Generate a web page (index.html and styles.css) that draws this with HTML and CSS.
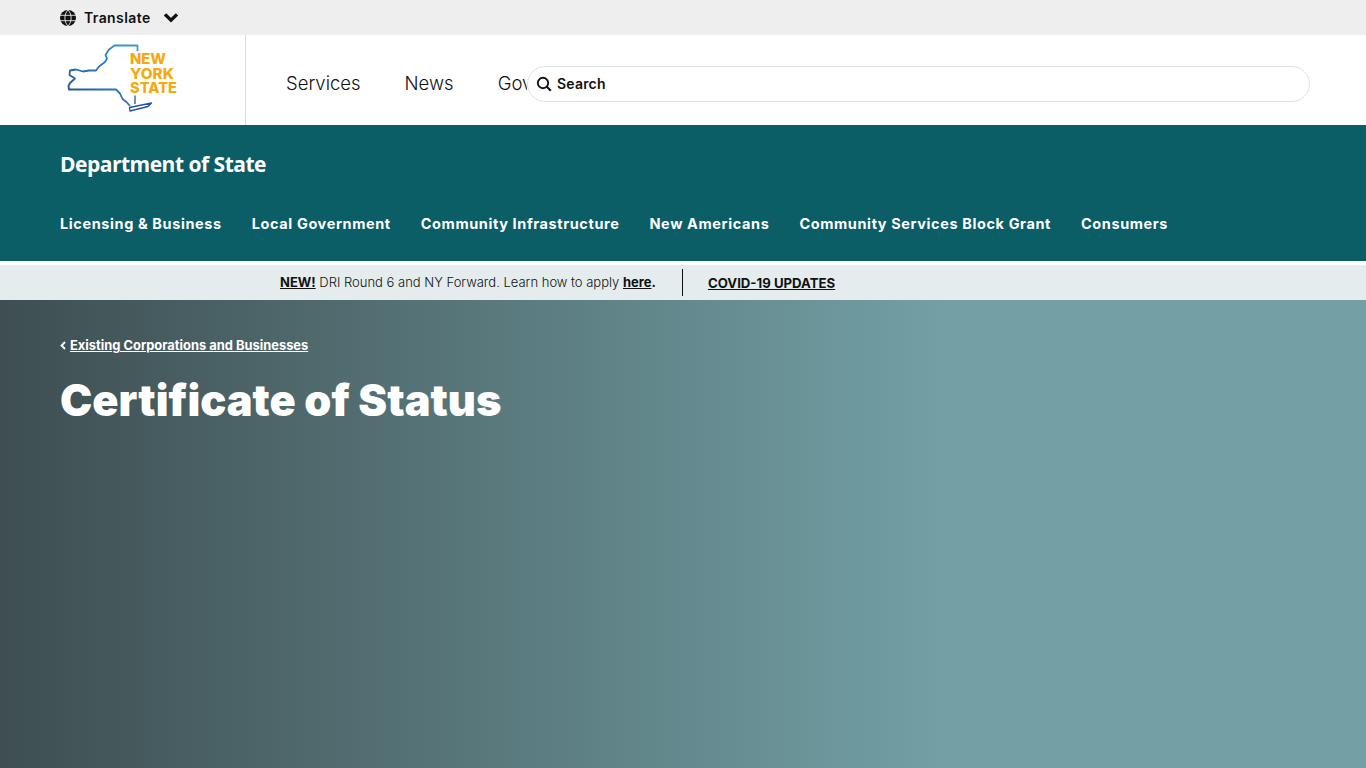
FILE: index.html
```html
<!DOCTYPE html>
<html lang="en">
<head>
  <meta charset="UTF-8" />
  <meta name="viewport" content="width=device-width, initial-scale=1.0"/>
  <title>Certificate of Status | Department of State</title>
  <link rel="stylesheet" href="styles.css">
</head>
<body>

  <div class="translate-bar">
    <svg class="globe" viewBox="0 0 16 16" width="16" height="16" aria-hidden="true">
      <circle cx="8" cy="8" r="8" fill="#111"/>
      <path d="M0 5.3h16M0 10.7h16M8 0C5.6 2.4 4.9 5.2 4.9 8s.7 5.6 3.1 8M8 0c2.4 2.4 3.1 5.2 3.1 8s-.7 5.6-3.1 8" fill="none" stroke="#eee" stroke-width="0.9"/>
    </svg>
    <span class="translate-label">Translate</span>
    <svg class="chevron" viewBox="0 0 16 11" width="16" height="11" aria-hidden="true">
      <path d="M2 2.4l6 5.8 6-5.8" fill="none" stroke="#111" stroke-width="3.4"/>
    </svg>
  </div>

  <header class="site-header">
    <div class="logo-cell">
      <svg class="logo" viewBox="0 0 125 80" width="125" height="80" role="img" aria-label="New York State">
        <defs>
          <linearGradient id="mapline" gradientUnits="userSpaceOnUse" x1="10" y1="70" x2="75" y2="8">
            <stop offset="0" stop-color="#1c4c9c"/>
            <stop offset="1" stop-color="#3a9ad2"/>
          </linearGradient>
        </defs>
        <path d="M77.5 13V7.5H54.5L49 11.5L45.5 17L47 20.5L45 24L39 28.5L36 32.5L29 32.5L23 33.5L16 31.5L10 32.5L9.5 37L15 40.5L10 45L8.5 48L9 51.5H56L60 55.5L62.5 61L66.5 64L70 68" fill="none" stroke="url(#mapline)" stroke-width="1.8" stroke-linejoin="round"/>
        <path d="M75 57.5V66M69.5 69.5L91.5 65L88 68.5L70 73Z" fill="none" stroke="#1f55a5" stroke-width="1.3" stroke-linejoin="round"/>
        <text class="logo-word" x="70" y="26" textLength="36" lengthAdjust="spacingAndGlyphs">NEW</text>
        <text class="logo-word" x="70" y="40.5" textLength="44" lengthAdjust="spacingAndGlyphs">YORK</text>
        <text class="logo-word" x="70" y="55" textLength="47" lengthAdjust="spacingAndGlyphs">STATE</text>
      </svg>
    </div>
    <nav class="main-nav">
      <a href="#">Services</a>
      <a href="#">News</a>
      <a href="#">Government</a>
    </nav>
    <div class="search-box">
      <svg viewBox="0 0 16 16" width="16" height="16" aria-hidden="true">
        <circle cx="7" cy="7" r="5.2" fill="none" stroke="#111" stroke-width="1.9"/>
        <path d="M10.8 10.8l4 4" stroke="#111" stroke-width="2.1"/>
      </svg>
      <span>Search</span>
    </div>
  </header>

  <section class="agency-bar">
    <h2>Department of State</h2>
    <nav class="agency-nav">
      <a href="#">Licensing &amp; Business</a>
      <a href="#">Local Government</a>
      <a href="#">Community Infrastructure</a>
      <a href="#">New Americans</a>
      <a href="#">Community Services Block Grant</a>
      <a href="#">Consumers</a>
    </nav>
  </section>

  <div class="alert-bar">
    <p class="alert-text"><a href="#">NEW!</a> DRI Round 6 and NY Forward. Learn how to apply <a href="#">here</a><b>.</b></p>
    <a class="alert-link" href="#">COVID-19 UPDATES</a>
  </div>

  <main class="hero">
    <a class="back-link" href="#">
      <svg viewBox="0 0 6 9" width="6" height="9" aria-hidden="true"><path d="M5 1L1.6 4.5L5 8" fill="none" stroke="#fff" stroke-width="1.9"/></svg>
      <span>Existing Corporations and Businesses</span>
    </a>
    <h1>Certificate of Status</h1>
  </main>

</body>
</html>
```

FILE: styles.css
```css
* {
  box-sizing: border-box;
}
html, body {
  height: 100%;
}
body {
  margin: 0;
  font-family: Inter, 'Open Sans', sans-serif;
  color: #111;
  background: #fff;
  display: flex;
  flex-direction: column;
  overflow: hidden;
}
a {
  color: inherit;
}
.translate-bar {
  height: 35px;
  flex: none;
  background: #eee;
  padding-left: 60px;
  display: flex;
  align-items: center;
}
.translate-label {
  margin-left: 8px;
  font-size: 14px;
  font-weight: 600;
  letter-spacing: 0.4px;
}
.chevron {
  margin-left: 12px;
}
.site-header {
  height: 90px;
  flex: none;
  display: flex;
  align-items: center;
  padding-right: 56px;
}
.logo-cell {
  flex: none;
  width: 246px;
  height: 90px;
  padding: 3px 0 0 60px;
  border-right: 1px solid #ddd;
}
.logo {
  display: block;
}
.logo-word {
  font-family: Inter, sans-serif;
  font-size: 15px;
  font-weight: 800;
  fill: #f5a90f;
}
.main-nav {
  flex: 1;
  min-width: 0;
  display: flex;
  gap: 44px;
  margin-top: 6px;
  padding-left: 40px;
  overflow: hidden;
  white-space: nowrap;
  font-size: 18.5px;
  font-weight: 300;
}
.main-nav a {
  text-decoration: none;
}
.search-box {
  flex: none;
  width: 783px;
  height: 36px;
  margin-top: 7px;
  padding-left: 8px;
  display: flex;
  align-items: center;
  gap: 5px;
  background: #fff;
  border: 1px solid #dde3e6;
  border-radius: 18px;
  font-size: 14px;
  font-weight: 600;
  letter-spacing: 0.2px;
}
.agency-bar {
  height: 136px;
  flex: none;
  background: #0b5d66;
  color: #fff;
  padding: 26px 60px 0;
}
.agency-bar h2 {
  margin: 0;
  font-family: 'Open Sans', sans-serif;
  font-size: 21px;
  line-height: 27px;
  font-weight: 700;
  letter-spacing: -0.5px;
}
.agency-nav {
  margin-top: 37px;
  display: flex;
  gap: 30px;
  font-size: 14.5px;
  font-weight: 700;
  letter-spacing: 0.6px;
}
.agency-nav a {
  text-decoration: none;
}
.alert-bar {
  height: 35px;
  flex: none;
  margin-top: 4px;
  background: #e4ecee;
  padding-left: 280px;
  display: flex;
  align-items: center;
  font-size: 13px;
}
.alert-text {
  margin: 0;
  padding-right: 26px;
  height: 27px;
  line-height: 27px;
  border-right: 1px solid #111;
  font-weight: 300;
}
.alert-text a,
.alert-text b,
.alert-link {
  font-weight: 700;
}
.alert-link {
  margin-left: 25px;
  font-size: 13.2px;
}
.hero {
  flex: 1;
  padding: 37px 60px 0;
  color: #fff;
  background: linear-gradient(90deg, #3e4e51 0%, #72a0a5 69%, #72a0a5 100%);
}
.back-link {
  display: flex;
  align-items: center;
  gap: 4px;
  font-size: 12.9px;
  font-weight: 700;
  line-height: 18px;
}
.back-link svg {
  margin-top: -2px;
}
.hero h1 {
  margin: 17px 0 0;
  font-size: 43.3px;
  line-height: 56px;
  font-weight: 900;
}
```
